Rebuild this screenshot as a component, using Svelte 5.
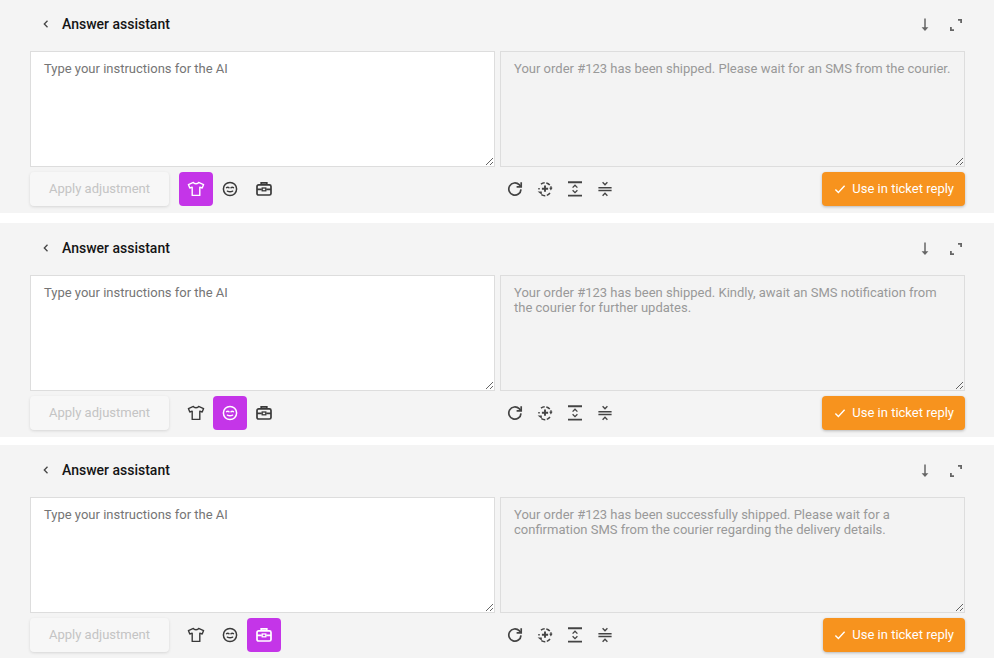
<script>
  // one entry per assistant panel, tab is the tone that is selected
  const panels = [
    { tab: 'shirt', answer: 'Your order #123 has been shipped. Please wait for an SMS from the courier.' },
    { tab: 'smile', answer: 'Your order #123 has been shipped. Kindly, await an SMS notification from the courier for further updates.' },
    { tab: 'case', answer: 'Your order #123 has been successfully shipped. Please wait for a confirmation SMS from the courier regarding the delivery details.' }
  ];
  const tabs = ['shirt', 'smile', 'case'];
</script>

<div class="page">
  {#each panels as panel}
    <section class="panel">
      <header class="head">
        <button class="back" aria-label="Back">
          <svg width="10" height="10" viewBox="0 0 10 10" fill="none" stroke="#444" stroke-width="1.3"><path d="M6.5 1.8 3.3 5l3.2 3.2" /></svg>
        </button>
        <h2>Answer assistant</h2>
        <div class="head-tools">
          <button class="head-btn" aria-label="Download">
            <svg width="14" height="14" viewBox="0 0 14 14" fill="none" stroke="#666" stroke-width="1.5"><path d="M7 .5v10" /><path d="M3.6 9.2h6.8L7 13Z" fill="#666" stroke="none" /></svg>
          </button>
          <button class="head-btn" aria-label="Expand">
            <svg width="14" height="14" viewBox="0 0 14 14" fill="none" stroke="#666" stroke-width="1.8"><path d="M9 1.9h3.1v3.1" /><path d="M5 12.1H1.9V9" /></svg>
          </button>
        </div>
      </header>

      <div class="fields">
        <textarea placeholder="Type your instructions for the AI"></textarea>
        <textarea class="result" readonly value={panel.answer}></textarea>
      </div>

      <div class="tools">
        <div class="tools-left">
          <button class="apply" disabled>Apply adjustment</button>
          <div class="tabs">
            {#each tabs as tab}
              <button class="tab" class:active={panel.tab === tab} aria-label={tab}>
                {#if tab === 'shirt'}
                  <svg width="18" height="18" viewBox="0 0 18 18" fill="none" stroke="currentColor" stroke-width="1.4" stroke-linejoin="round"><path d="M6.4 2.4 1.4 4.6l1.4 3.4 2.4-.8v8.2h7.6V7.2l2.4.8 1.4-3.4-5-2.2C11.2 4.2 6.8 4.2 6.4 2.4Z" /></svg>
                {:else if tab === 'smile'}
                  <svg width="18" height="18" viewBox="0 0 18 18" fill="none" stroke="currentColor" stroke-width="1.5" stroke-linecap="round"><circle cx="9" cy="9" r="6.6" /><path d="M5.6 7.7c.8-.5 1.6-.5 2.3 0" /><path d="M10.1 7.7c.7-.5 1.5-.5 2.3 0" /><path d="M6.4 11.2c1.6.8 3.6.8 5.2 0" /></svg>
                {:else}
                  <svg width="18" height="18" viewBox="0 0 18 18" fill="none" stroke="currentColor" stroke-width="1.7"><path d="M6.2 4.8V2.9h5.6v1.9" /><rect x="2" y="4.8" width="14" height="10.2" rx="1.6" /><path d="M2 9.4h4.8M11.2 9.4H16" /><rect x="7.2" y="8" width="3.6" height="2.8" stroke-width="1.3" /></svg>
                {/if}
              </button>
            {/each}
          </div>
        </div>

        <div class="tools-right">
          <button class="action" aria-label="Regenerate">
            <svg width="18" height="18" viewBox="0 0 18 18" fill="none" stroke="#444" stroke-width="1.7"><path d="M15 9.4a6.1 6.1 0 1 1-1.8-4.7l1.6 1.8" /><path d="M15.2 2.2v4.6h-4.6" /></svg>
          </button>
          <button class="action" aria-label="Improve">
            <svg width="18" height="18" viewBox="0 0 18 18" fill="none" stroke="#444" stroke-width="1.5"><path d="M5 4.2A6.3 6.3 0 0 1 15.2 8" stroke-dasharray="4 1.6" /><path d="M14 13a6.3 6.3 0 0 1-9.6.8" stroke-dasharray="4 1.4" /><path d="M1.6 11.4h4.2v3.4Z" fill="#444" stroke="none" /><path d="M3 9.4V8" /><path d="M9 5.6v6.2M5.9 8.7h6.2" stroke-width="1.9" /><path d="M13.2 7.8h3.4l-1.7 2.6Z" fill="#444" stroke="none" /></svg>
          </button>
          <button class="action" aria-label="Expand text">
            <svg width="18" height="18" viewBox="0 0 18 18" fill="none" stroke="#444"><path d="M2 2.2h14M2 15.6h14" stroke-width="1.9" /><path d="M6.6 7.6 9 5.2l2.4 2.4M6.6 10.2 9 12.6l2.4-2.4" stroke-width="1.3" /></svg>
          </button>
          <button class="action" aria-label="Shorten text">
            <svg width="18" height="18" viewBox="0 0 18 18" fill="none" stroke="#444"><path d="M2.4 7.7h13.2M2.4 10.5h13.2" stroke-width="1.6" /><path d="M6.6 2.2 9 4.8l2.4-2.6M6.6 15.8 9 13.2l2.4 2.6" stroke-width="1.3" /></svg>
          </button>
          <button class="use">
            <svg width="12" height="12" viewBox="0 0 12 12" fill="none" stroke="#fff" stroke-width="1.4"><path d="M1.4 6.4 4.4 9.4 10.6 2.8" /></svg>
            Use in ticket reply
          </button>
        </div>
      </div>
    </section>
  {/each}
</div>

<style>
  :global(body) {
    margin: 0;
    background: #fff;
  }

  .page {
    display: flex;
    flex-direction: column;
    font-family: Roboto, "Liberation Sans", sans-serif;
    height: 658px;
    overflow: hidden;
  }

  .panel {
    background: #f4f4f4;
    padding: 0 29px 7px 30px;
    height: 214px;
    box-sizing: border-box;
    flex: none;
  }
  .panel:nth-child(1) {
    height: 213px;
    margin-bottom: 10px;
  }
  .panel:nth-child(1) .head {
    height: 51px;
    padding: 1px 0 5px;
  }
  .panel:nth-child(2) {
    margin-bottom: 8px;
  }
  .panel:nth-child(3) .use {
    width: 142px;
  }

  button {
    font-family: inherit;
    border: none;
    background: none;
    padding: 0;
    cursor: pointer;
  }

  .head {
    height: 52px;
    box-sizing: border-box;
    padding: 2px 0 5px;
    display: flex;
    align-items: center;
  }
  .back {
    display: flex;
    width: 10px;
    margin-left: 11px;
    margin-right: 11px;
  }
  h2 {
    margin: 0;
    font-size: 14px;
    font-weight: 500;
    color: #151515;
  }
  .head-tools {
    margin-left: auto;
    margin-top: 2px;
    display: flex;
    gap: 17px;
    padding-right: 2px;
  }
  .head-btn {
    display: flex;
  }

  .fields {
    display: grid;
    grid-template-columns: 465px 465px;
    gap: 5px;
  }
  textarea {
    display: block;
    width: 100%;
    height: 116px;
    box-sizing: border-box;
    border: 1px solid #ddd;
    padding: 9px 13px;
    font-family: inherit;
    font-size: 13px;
    line-height: 15px;
    color: #555;
    background: #fff;
    outline: none;
    border-radius: 0;
  }
  textarea::placeholder {
    color: #757575;
  }
  .result {
    background: #f3f3f3;
    color: #999;
  }

  .tools {
    display: grid;
    grid-template-columns: 465px 465px;
    gap: 5px;
    margin-top: 5px;
  }
  .tools-left,
  .tools-right {
    display: flex;
    align-items: center;
    height: 34px;
  }
  .apply {
    width: 139px;
    height: 34px;
    padding-bottom: 1px;
    background: #f7f7f7;
    color: #c4c4c4;
    font-size: 13px;
    border-radius: 4px;
    box-shadow: 0 1px 3px rgba(0, 0, 0, 0.12);
    cursor: default;
  }
  .tabs {
    display: flex;
    margin-left: 10px;
  }
  .tab {
    width: 34px;
    height: 34px;
    display: flex;
    align-items: center;
    justify-content: center;
    color: #3a3a3a;
    border-radius: 4px;
  }
  .tab.active {
    background: #c435e8;
    color: #fff;
  }
  .action {
    width: 30px;
    height: 34px;
    display: flex;
    align-items: center;
    justify-content: center;
  }
  .use {
    margin-left: auto;
    width: 143px;
    height: 34px;
    padding: 0 11px 1px 0;
    background: #f7931e;
    color: #fff;
    font-size: 13px;
    border-radius: 4px;
    box-shadow: 0 1px 3px rgba(0, 0, 0, 0.25);
    display: flex;
    align-items: center;
    justify-content: flex-end;
    gap: 6px;
  }
</style>
